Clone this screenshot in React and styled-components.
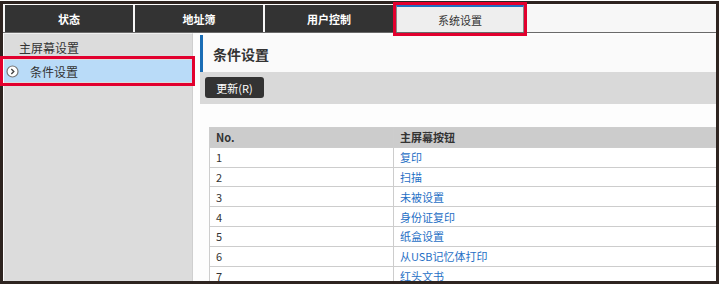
import styled, { createGlobalStyle } from 'styled-components';

const GlobalStyle = createGlobalStyle`
  html, body {
    margin: 0;
    padding: 0;
    background: #ffffff;
  }
  body {
    font-family: "Noto Sans CJK SC", "Noto Sans", "Liberation Sans", sans-serif;
    color: #333;
  }
`;

const Frame = styled.div`
  margin-top: 1px;
  width: 719px;
  height: 283px;
  box-sizing: border-box;
  border: 3px solid #2e2420;
  padding: 1px 0 0 0;
  display: flex;
  flex-direction: column;
  background: #fdfdfd;
`;

const TabBar = styled.div`
  display: flex;
  gap: 2px;
  padding-left: 2px;
  height: 27px;
  border-bottom: 1px solid #6a6a6a;
  background: #f7f7f7;
`;

const Tab = styled.div`
  position: relative;
  width: 128px;
  display: flex;
  align-items: center;
  justify-content: center;
  font-size: 11px;
  box-sizing: border-box;
  background: ${p => (p.$active ? '#eeeeee' : '#333333')};
  color: ${p => (p.$active ? '#333' : '#fff')};
  font-weight: ${p => (p.$active ? 'normal' : 'bold')};
  margin-left: ${p => (p.$active ? '1px' : '0')};
  border-top: ${p => (p.$active ? '2px solid #1e6fc0' : 'none')};
  border-left: ${p => (p.$active ? '1px solid #8a8a8a' : 'none')};
  border-right: ${p => (p.$active ? '1px solid #8a8a8a' : 'none')};

  &::after {
    content: '';
    display: ${p => (p.$marked ? 'block' : 'none')};
    position: absolute;
    left: -4px;
    right: -4px;
    top: -5px;
    bottom: -4px;
    border: 3px solid #e2002e;
    pointer-events: none;
  }
`;

const Body = styled.div`
  flex: 1;
  display: flex;
  min-height: 0;
  padding-left: 1px;
`;

const Sidebar = styled.div`
  width: 189px;
  flex: none;
  background: #dcdcdc;
  border-top: 1px solid #f0f0f0;
  border-right: 1px solid #cfcfcf;
  padding-top: 2px;
  box-sizing: border-box;
  display: flex;
  flex-direction: column;
  gap: 2px;
`;

const SideItem = styled.div`
  position: relative;
  height: 22px;
  display: flex;
  align-items: center;
  gap: 9px;
  padding-left: ${p => (p.$active ? '2px' : '15px')};
  font-size: 12px;
  color: #333;
  background: ${p => (p.$active ? '#b9dbf8' : 'transparent')};

  &::after {
    content: '';
    display: ${p => (p.$marked ? 'block' : 'none')};
    position: absolute;
    left: -4px;
    right: -3px;
    top: -4px;
    bottom: -4px;
    border: 3px solid #e2002e;
    pointer-events: none;
  }
`;

const SideLabel = styled.span`
  margin-left: 2px;
`;

const Main = styled.div`
  flex: 1;
  min-width: 0;
  margin-left: 7px;
  margin-top: 2px;
  overflow: hidden;
  display: flex;
  flex-direction: column;
`;

const PageHeader = styled.div`
  height: 37px;
  flex: none;
  display: flex;
  align-items: center;
  padding-left: 10px;
  border-left: 3px solid #1a6db5;
  background: #fafafa;
  font-size: 14px;
  font-weight: bold;
  color: #333;
`;

const Toolbar = styled.div`
  height: 32px;
  flex: none;
  background: #d9d9d9;
  padding: 5px 0 0 5px;
  box-sizing: border-box;
`;

const Button = styled.button`
  width: 59px;
  height: 21px;
  border: none;
  border-radius: 3px;
  background: #333;
  color: #fff;
  font-family: inherit;
  font-size: 11px;
  padding: 0;
  display: flex;
  align-items: center;
  justify-content: center;
`;

const Table = styled.table`
  margin: 23px 0 0 9px;
  width: 640px;
  border-collapse: collapse;
  font-size: 11px;
  table-layout: fixed;

  th, td {
    height: 18.8px;
    line-height: 18px;
    padding: 0 0 0 6px;
    text-align: left;
    border: 1px solid #cdcdcd;
    white-space: nowrap;
  }

  th {
    background: #cccccc;
    color: #333;
    font-weight: bold;
  }

  td {
    background: #fff;
    color: #333;
  }
`;

const LinkCell = styled.td`
  && {
    color: #1f6fc5;
  }
`;

function CircleArrow() {
  return (
    <svg width="13" height="13" viewBox="0 0 13 13">
      <circle cx="6.5" cy="6.5" r="5.5" fill="#fff" stroke="#777" strokeWidth="1.2" />
      <path d="M5.3 4 L7.8 6.5 L5.3 9" fill="none" stroke="#444" strokeWidth="1.4" />
    </svg>
  );
}

const tabs = ['状态', '地址簿', '用户控制', '系统设置'];

const rows = [
  ['1', '复印'],
  ['2', '扫描'],
  ['3', '未被设置'],
  ['4', '身份证复印'],
  ['5', '纸盒设置'],
  ['6', '从USB记忆体打印'],
  ['7', '红头文书'],
];

export default function App() {
  return (
    <>
      <GlobalStyle />
      <Frame>
        <TabBar>
          {tabs.map((t, i) => (
            <Tab key={t} $active={i === 3} $marked={i === 3}>{t}</Tab>
          ))}
        </TabBar>
        <Body>
          <Sidebar>
            <SideItem>主屏幕设置</SideItem>
            <SideItem $active $marked>
              <CircleArrow />
              <SideLabel>条件设置</SideLabel>
            </SideItem>
          </Sidebar>
          <Main>
            <PageHeader>条件设置</PageHeader>
            <Toolbar>
              <Button>更新(R)</Button>
            </Toolbar>
            <Table>
              <colgroup>
                <col style={{ width: 184 }} />
                <col />
              </colgroup>
              <thead>
                <tr>
                  <th>No.</th>
                  <th>主屏幕按钮</th>
                </tr>
              </thead>
              <tbody>
                {rows.map(r => (
                  <tr key={r[0]}>
                    <td>{r[0]}</td>
                    <LinkCell>{r[1]}</LinkCell>
                  </tr>
                ))}
              </tbody>
            </Table>
          </Main>
        </Body>
      </Frame>
    </>
  );
}
